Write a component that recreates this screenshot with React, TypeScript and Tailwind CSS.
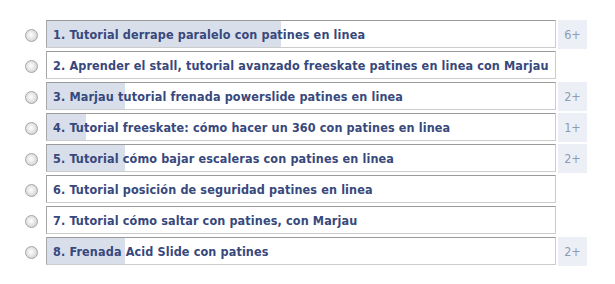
import React from "react";

const items = [
  { t: "1. Tutorial derrape paralelo con patines en linea", v: 6 },
  { t: "2. Aprender el stall, tutorial avanzado freeskate patines en linea con Marjau", v: 0 },
  { t: "3. Marjau tutorial frenada powerslide patines en linea", v: 2 },
  { t: "4. Tutorial freeskate: cómo hacer un 360 con patines en linea", v: 1 },
  { t: "5. Tutorial cómo bajar escaleras con patines en linea", v: 2 },
  { t: "6. Tutorial posición de seguridad patines en linea", v: 0 },
  { t: "7. Tutorial cómo saltar con patines, con Marjau", v: 0 },
  { t: "8. Frenada Acid Slide con patines", v: 2 },
];
const total = items.reduce((a, b) => a + b.v, 0);

export default function App() {
  return (
    <div className="w-[615px] h-[284px] bg-white pt-[20px] pl-[25px] flex flex-col gap-[3px]" style={{ fontFamily: '"DejaVu Sans", sans-serif' }}>
      {items.map((it, i) => (
        <div key={i} className="flex items-center h-[28px]">
          <div className="w-[13px] h-[13px] mt-[3px] rounded-full border border-[#a5a5a5] bg-[radial-gradient(circle_at_45%_45%,#ffffff_0%,#e6e6e6_45%,#c4c4c4_100%)] shrink-0" />
          <div className="relative ml-[8px] w-[510px] h-[28px] border border-t-[#9a9a9a] border-l-[#a8a8a8] border-r-[#cccccc] border-b-[#cccccc] bg-white shrink-0">
            {it.v > 0 && (
              <div className="absolute left-0 top-0 bottom-0 bg-[#d8dfea]" style={{ width: `${(it.v / total) * 508}px` }} />
            )}
            <div className="relative h-full flex items-center pl-[6px] pt-[2px] text-[12.5px] font-bold text-[#37487c] whitespace-nowrap [font-stretch:condensed] tracking-[0.13px]">
              {it.t}
            </div>
          </div>
          {it.v > 0 && (
            <div className="ml-[2px] w-[29px] h-[29px] pt-[2px] bg-[#eceff5] flex items-center justify-center text-[12.5px] text-[#8f9ab4] [font-stretch:condensed]">
              {it.v}+
            </div>
          )}
        </div>
      ))}
    </div>
  );
}
